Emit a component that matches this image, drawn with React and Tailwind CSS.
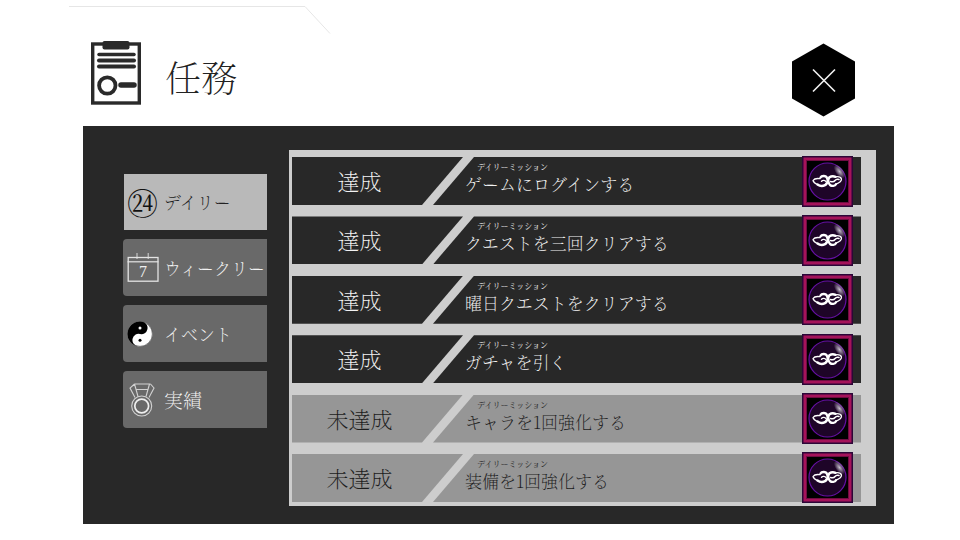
import React from "react";

const tabs = [
  { label: "デイリー", Icon: DayIcon, active: true },
  { label: "ウィークリー", Icon: WeekIcon },
  { label: "イベント", Icon: YinYangIcon },
  { label: "実績", Icon: MedalIcon, large: true },
];

const missions = [
  { title: "ゲームにログインする", done: true },
  { title: "クエストを三回クリアする", done: true },
  { title: "曜日クエストをクリアする", done: true },
  { title: "ガチャを引く", done: true },
  { title: "キャラを1回強化する", done: false },
  { title: "装備を1回強化する", done: false },
];

function ClipboardIcon() {
  return (
    <svg viewBox="0 0 50 64" className="h-16 w-[50px] shrink-0" fill="none" stroke="#2a2a2a" aria-hidden="true">
      <rect x="1.7" y="3" width="46.6" height="59" strokeWidth="3.4" />
      <rect x="11.5" y="0" width="27" height="8.5" rx="2" fill="#2a2a2a" stroke="none" />
      <g strokeLinecap="round" strokeWidth="4">
        <path d="M8 13.5h35" strokeWidth="3.5" />
        <path d="M8 19.5h35" />
        <path d="M8 25.5h35" />
        <path d="M30 44h13" strokeWidth="5.5" />
      </g>
      <circle cx="16.3" cy="44.5" r="8.2" strokeWidth="3.8" />
    </svg>
  );
}

function DayIcon() {
  return <span aria-hidden="true" className="block text-[31px] font-normal leading-8 text-[#111]">㉔</span>;
}

function WeekIcon() {
  return (
    <svg viewBox="0 0 32 29" className="h-[29px] w-8" fill="none" stroke="#e4e4e4" aria-hidden="true">
      <rect x="1.2" y="4.5" width="29.8" height="23.7" strokeWidth="1.3" />
      <path d="M.5 8.8h31" strokeWidth="1.2" />
      <path d="M10 0v6M21.2 0v6" strokeWidth="0.9" />
      <text x="16" y="24" textAnchor="middle" fontSize="16" fontFamily="'Liberation Serif',serif" fill="#eee" stroke="none">
        7
      </text>
    </svg>
  );
}

function YinYangIcon() {
  return (
    <svg viewBox="0 0 26 26" className="size-[26px]" aria-hidden="true">
      <g transform="rotate(12 13 13)">
        <circle cx="13" cy="13" r="12.5" fill="#fff" />
        <path d="M13 .5a12.5 12.5 0 0 0 0 25a6.25 6.25 0 0 1 0-12.5a6.25 6.25 0 0 0 0-12.5" fill="#000" />
      </g>
      <circle cx="13" cy="7" r="1.5" fill="#fff" />
      <circle cx="13" cy="19.3" r="1.5" fill="#000" />
      <circle cx="13" cy="13" r="12.3" fill="none" stroke="#000" strokeWidth="0.4" />
    </svg>
  );
}

function MedalIcon() {
  return (
    <svg viewBox="0 0 28 34" className="h-[34px] w-7" fill="none" stroke="#d2d2d2" strokeWidth="1.1" aria-hidden="true">
      <path d="M7.5 1h16M7.5 1L3 5l5 9.5M23.5 1L27 5l-5 9.5M7.5 1L11 13.5M22.5 1L19 13.5M9.5 6.5h11" />
      <circle cx="14.7" cy="23" r="10" />
      <circle cx="14.7" cy="23" r="6.9" stroke="#eee" strokeWidth="1.7" />
    </svg>
  );
}

function OrbIcon() {
  return (
    <svg viewBox="0 0 51 51" className="relative -my-0.5 -ml-[59px] mr-2 size-[51px] shrink-0" role="img" aria-label="報酬">
      <defs>
        <radialGradient id="shine">
          <stop offset="0" stopColor="#c4bccb" />
          <stop offset="1" stopColor="#c4bccb" stopOpacity="0" />
        </radialGradient>
      </defs>
      <rect width="51" height="51" fill="#2c0638" />
      <rect x="3" y="3" width="45" height="45" fill="#000" stroke="#a5135a" strokeWidth="3" />
      <rect x="4.5" y="4.5" width="42" height="42" fill="none" stroke="#6f0d42" strokeWidth="1" />
      <circle cx="25.5" cy="25.5" r="18.5" fill="#1e0528" stroke="#6610a4" strokeWidth="1.2" />
      <ellipse cx="37.5" cy="15.5" rx="8" ry="4" fill="url(#shine)" transform="rotate(54 37.5 15.5)" />
      <g fill="none" stroke="#fff" strokeLinecap="round" strokeLinejoin="round">
        <path d="M18.5 21.5c1-2 5.500-2.200 6.500.5 1 2.500 1.500 5.500 3 7 1.800 1.500 5 1.200 6-.8" strokeWidth="2.3" />
        <path d="M33.500 20.800c-3-1.300-6.500-.300-7 2.200s-1.500 5-3.500 6.200c-2.500 1.300-5.500.8-7.500-.7" strokeWidth="2.5" />
        <path d="M19.500 25.200c1.500-1.400 3.500-.8 4.500.300" strokeWidth="1.400" />
        <path d="M15.500 28.500c-2-.8-4-2.200-4.500-4 1-1.500 4-2.300 7-1.800" strokeWidth="1.300" />
        <path d="M34 28.200c3-1.200 5.500-3 5.500-5.200-.5-1.700-3.500-2.500-6-2.200" strokeWidth="1.300" />
        <path d="M28.500 25.500c1.500.5 3.500.5 4.500-1 .8-1 2.500-1.500 4-1" strokeWidth="1.500" />
      </g>
    </svg>
  );
}

function Mission({ title, done }) {
  const tone = done ? "bg-[#282828] text-[#f2f2f2]" : "bg-[#969696] text-[#1c1c1c]";
  return (
    <li className="flex h-12 items-center">
      <div className={`flex h-full w-[171px] shrink-0 items-center justify-center pr-9 text-[22px] leading-none [clip-path:polygon(0_0,100%_0,130px_100%,0_100%)] ${tone}`}>
        <span>{done ? "達成" : "未達成"}</span>
      </div>
      <div className={`-ml-[30px] h-full min-w-0 flex-1 pl-8 pt-[5px] [clip-path:polygon(41px_0,100%_0,100%_100%,0_100%)] ${tone}`}>
        <p className="pl-3 text-[8px] font-normal leading-[10px]">デイリーミッション</p>
        <h2 className="text-[17px] leading-6">{title}</h2>
      </div>
      <OrbIcon />
    </li>
  );
}

export default function App() {
  return (
    <div className="min-h-screen bg-white pb-4 pl-[83px] pr-[66px] font-['Noto_Serif_CJK_JP','Noto_Sans_CJK_JP',serif] font-extralight text-[#222]">
      <header className="relative flex h-[126px] items-center pl-2 pr-[38px] pt-[34px]">
        <svg viewBox="0 0 264 30" className="absolute -left-3.5 top-1 h-[30px] w-[264px]" fill="none" stroke="#e6e6e6" aria-hidden="true">
          <path d="M0 2.5h236l25 27" />
        </svg>
        <div className="flex flex-1 items-center gap-6 pb-3.5">
          <ClipboardIcon />
          <h1 className="pt-2 text-[36px] leading-[48px]">任務</h1>
        </div>
        <button type="button" aria-label="閉じる" className="flex h-[74px] w-16 items-center justify-center">
          <svg viewBox="0 0 64 74" className="size-full" aria-hidden="true">
            <path d="M31.5 .5L63 18.5v37L31.5 73.5 0 55.5v-37z" fill="#000" />
            <path d="M21 26.5l22 22M43 26.5l-22 22" stroke="#f2f2f2" strokeWidth="1.6" />
          </svg>
        </button>
      </header>
      <main className="flex items-start gap-[22px] bg-[#282828] pb-[18px] pl-10 pr-[18px] pt-6">
        <nav className="flex w-36 shrink-0 flex-col gap-[9px] pt-6">
          {tabs.map(({ label, Icon, active, large }) => (
            <button
              key={label}
              type="button"
              className={`flex items-center gap-1 whitespace-nowrap text-left leading-6 ${active ? "ml-px h-14 bg-[#b9b9b9] pl-[3px] text-[#222]" : "h-[57px] rounded-l-sm bg-[#696969] pl-1 text-[#f2f2f2]"} ${large ? "text-[19px]" : "text-[17px]"}`}
            >
              <span className="w-[33px] shrink-0">
                <Icon />
              </span>
              <span>{label}</span>
            </button>
          ))}
        </nav>
        <ul className="flex min-h-[356px] min-w-0 flex-1 flex-col justify-between bg-[#cdcdcd] pb-1 pl-[3px] pr-[15px] pt-[7px]">
          {missions.map((m) => (
            <Mission key={m.title} {...m} />
          ))}
        </ul>
      </main>
    </div>
  );
}
